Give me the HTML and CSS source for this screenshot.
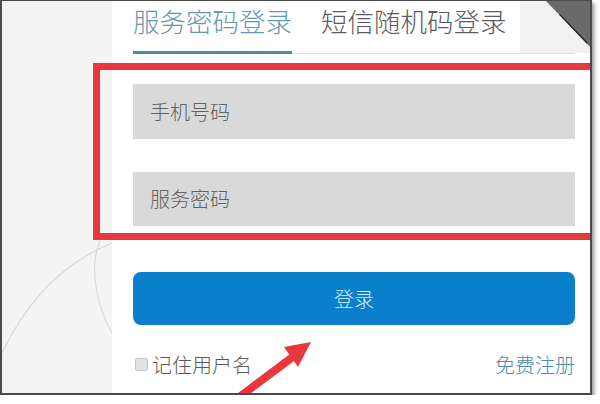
FILE: index.html
```html
<!DOCTYPE html>
<html lang="zh-CN">
<head>
    <meta charset="UTF-8">
    <meta name="viewport" content="width=device-width, initial-scale=1.0">
    <title>服务密码登录</title>
    <link rel="stylesheet" href="styles.css">
</head>
<body>
    <div class="frame">
        <div class="aside">
            <svg class="arcs" width="110" height="400" viewBox="0 0 110 400">
                <path d="M0 352 C 25 300, 60 262, 110 242" />
                <path d="M98 240 C 88 262, 92 300, 110 332" />
            </svg>
        </div>

        <div class="panel">
            <div class="tabs">
                <div class="tab active">服务密码登录</div>
                <div class="tab">短信随机码登录</div>
            </div>

            <div class="field">手机号码</div>
            <div class="field second">服务密码</div>

            <button class="login">登录</button>

            <div class="extra">
                <label class="remember"><input type="checkbox">记住用户名</label>
                <a class="register" href="#">免费注册</a>
            </div>
        </div>

        <!-- corner of the dialog, folded -->
        <div class="corner">
            <div class="fold"></div>
        </div>

        <!-- annotations drawn over the screenshot -->
        <div class="mark"></div>
        <svg class="arrow" width="592" height="396" viewBox="0 0 592 396">
            <line x1="228" y1="403" x2="292" y2="355" />
            <polygon points="309,341 282,346 296,366" />
        </svg>
    </div>
</body>
</html>
```

FILE: styles.css
```css
body {
    margin: 0;
    background-color: #ffffff;
    font-family: "Noto Sans CJK SC", "Noto Sans", sans-serif;
}

.frame {
    position: relative;
    display: flex;
    width: 592px;
    height: 395px;
    box-sizing: border-box;
    border: 2px solid #4a4a4a;
    border-top-width: 1px;
    box-shadow: 2px 3px 4px rgba(0, 0, 0, 0.45);
    overflow: hidden;
    background-color: #ffffff;
}

.aside {
    width: 110px;
    flex-shrink: 0;
    background-color: #f4f4f4;
}

.arcs path {
    fill: none;
    stroke: #d6dada;
    stroke-width: 1.2;
}

.panel {
    flex: 1;
    padding: 0 15px 0 21px;
}

.tabs {
    display: flex;
    gap: 29px;
    border-bottom: 1px solid #e2e2e2;
}

.tab {
    padding: 2px 0 12px;
    font-size: 26.5px;
    font-weight: 300;
    line-height: 36px;
    color: #5c5c5c;
}

.tab.active {
    color: #6796b0;
    border-bottom: 3px solid #4a8aab;
    margin-bottom: -1px;
}

.field {
    margin-top: 30px;
    height: 55px;
    padding-left: 17px;
    background-color: #d9d9d9;
    color: #626262;
    font-size: 20px;
    font-weight: 300;
    line-height: 55px;
}

.field.second {
    margin-top: 33px;
    height: 54px;
    line-height: 54px;
}

.login {
    display: block;
    width: 100%;
    height: 53px;
    margin-top: 46px;
    border: none;
    border-radius: 8px;
    background-color: #0b7fcb;
    color: #d6ecf6;
    font-family: inherit;
    font-size: 20px;
    font-weight: 300;
}

.extra {
    display: flex;
    justify-content: space-between;
    align-items: center;
    margin-top: 28px;
    height: 22px;
    font-size: 20px;
    font-weight: 300;
}

.remember {
    display: flex;
    align-items: center;
    color: #5a5a5a;
}

.remember input {
    -webkit-appearance: none;
    appearance: none;
    width: 13px;
    height: 13px;
    margin: 0 4px 0 2px;
    border: 1px solid #c4c4c4;
    border-radius: 2px;
    background-color: #e2e2e2;
}

.register {
    color: #4c89a9;
    text-decoration: none;
}

.corner {
    position: absolute;
    top: 0;
    right: 0;
    width: 70px;
    height: 52px;
    background-color: #f1f1f1;
}

.fold {
    position: absolute;
    top: 0;
    right: 0;
    width: 44px;
    height: 46px;
    background-color: #6a6a6a;
    clip-path: polygon(0 0, 100% 0, 100% 100%);
}

.fold::after {
    content: '';
    position: absolute;
    top: 13px;
    left: 14px;
    width: 40px;
    height: 3px;
    background-color: #1e1e1e;
    transform: rotate(46deg);
    transform-origin: 0 0;
}

.mark {
    position: absolute;
    top: 62px;
    left: 91px;
    right: 0;
    height: 177px;
    box-sizing: border-box;
    border: 7px solid #e8383d;
    border-right: none;
}

.arrow {
    position: absolute;
    top: 0;
    left: 0;
}

.arrow line {
    stroke: #e8383d;
    stroke-width: 8;
}

.arrow polygon {
    fill: #e8383d;
}
```
